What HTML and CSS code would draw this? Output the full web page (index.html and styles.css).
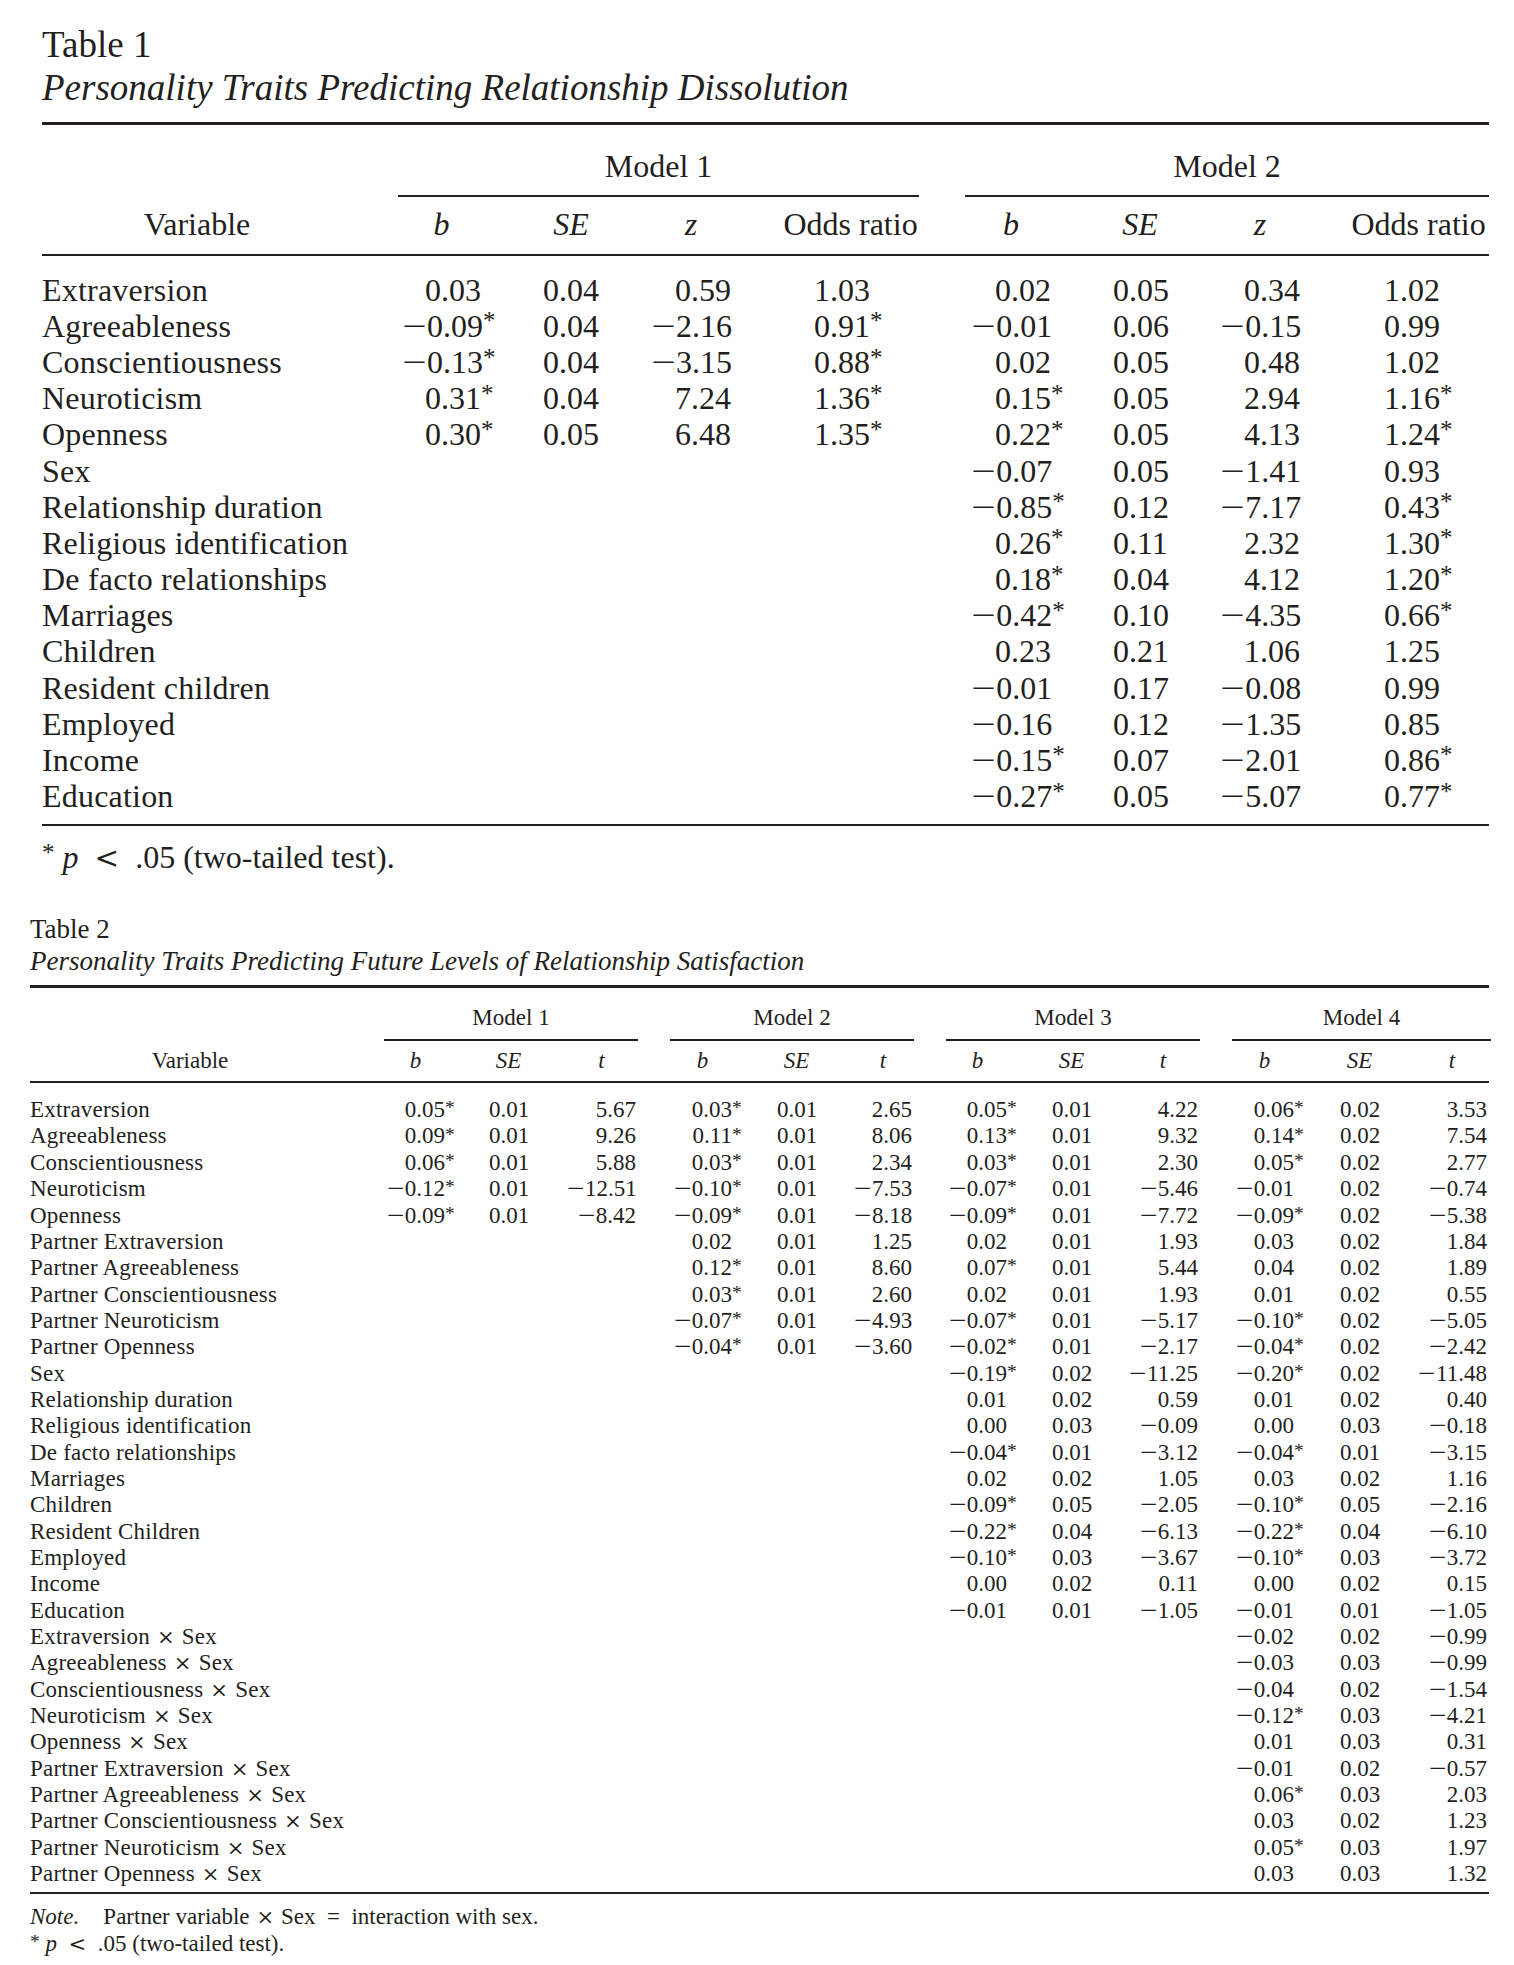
FILE: index.html
```html
<!DOCTYPE html>
<html lang="en">
<head>
<meta charset="utf-8">
<title>Personality Traits Tables</title>
<link rel="stylesheet" href="styles.css">
</head>
<body>
<main class="page">

<section class="tbl tbl-1">
  <div class="cap">
    <div class="cap-label">Table 1</div>
    <div class="cap-title">Personality Traits Predicting Relationship Dissolution</div>
  </div>
  <div class="frame">
    <table class="data">
      <colgroup>
        <col class="w1"><col class="w2"><col class="w3"><col class="w4"><col class="w5"><col class="w6"><col class="w7"><col class="w8"><col class="w9">
      </colgroup>
      <thead>
        <tr class="grp-row">
          <th rowspan="2" class="var-h">Variable</th>
          <th colspan="4" class="grp"><div class="grp-lab">Model 1</div></th>
          <th colspan="4" class="grp"><div class="grp-lab">Model 2</div></th>
        </tr>
        <tr class="col-row">
          <th><i>b</i></th><th><i>SE</i></th><th><i>z</i></th><th>Odds ratio</th>
          <th><i>b</i></th><th><i>SE</i></th><th><i>z</i></th><th>Odds ratio</th>
        </tr>
      </thead>
      <tbody>
        <tr><td>Extraversion</td><td>0.03</td><td>0.04</td><td>0.59</td><td>1.03</td><td>0.02</td><td>0.05</td><td>0.34</td><td>1.02</td></tr>
        <tr><td>Agreeableness</td><td><span class="m">&minus;</span>0.09<sup>*</sup></td><td>0.04</td><td><span class="m">&minus;</span>2.16</td><td>0.91<sup>*</sup></td><td><span class="m">&minus;</span>0.01</td><td>0.06</td><td><span class="m">&minus;</span>0.15</td><td>0.99</td></tr>
        <tr><td>Conscientiousness</td><td><span class="m">&minus;</span>0.13<sup>*</sup></td><td>0.04</td><td><span class="m">&minus;</span>3.15</td><td>0.88<sup>*</sup></td><td>0.02</td><td>0.05</td><td>0.48</td><td>1.02</td></tr>
        <tr><td>Neuroticism</td><td>0.31<sup>*</sup></td><td>0.04</td><td>7.24</td><td>1.36<sup>*</sup></td><td>0.15<sup>*</sup></td><td>0.05</td><td>2.94</td><td>1.16<sup>*</sup></td></tr>
        <tr><td>Openness</td><td>0.30<sup>*</sup></td><td>0.05</td><td>6.48</td><td>1.35<sup>*</sup></td><td>0.22<sup>*</sup></td><td>0.05</td><td>4.13</td><td>1.24<sup>*</sup></td></tr>
        <tr><td>Sex</td><td></td><td></td><td></td><td></td><td><span class="m">&minus;</span>0.07</td><td>0.05</td><td><span class="m">&minus;</span>1.41</td><td>0.93</td></tr>
        <tr><td>Relationship duration</td><td></td><td></td><td></td><td></td><td><span class="m">&minus;</span>0.85<sup>*</sup></td><td>0.12</td><td><span class="m">&minus;</span>7.17</td><td>0.43<sup>*</sup></td></tr>
        <tr><td>Religious identification</td><td></td><td></td><td></td><td></td><td>0.26<sup>*</sup></td><td>0.11</td><td>2.32</td><td>1.30<sup>*</sup></td></tr>
        <tr><td>De facto relationships</td><td></td><td></td><td></td><td></td><td>0.18<sup>*</sup></td><td>0.04</td><td>4.12</td><td>1.20<sup>*</sup></td></tr>
        <tr><td>Marriages</td><td></td><td></td><td></td><td></td><td><span class="m">&minus;</span>0.42<sup>*</sup></td><td>0.10</td><td><span class="m">&minus;</span>4.35</td><td>0.66<sup>*</sup></td></tr>
        <tr><td>Children</td><td></td><td></td><td></td><td></td><td>0.23</td><td>0.21</td><td>1.06</td><td>1.25</td></tr>
        <tr><td>Resident children</td><td></td><td></td><td></td><td></td><td><span class="m">&minus;</span>0.01</td><td>0.17</td><td><span class="m">&minus;</span>0.08</td><td>0.99</td></tr>
        <tr><td>Employed</td><td></td><td></td><td></td><td></td><td><span class="m">&minus;</span>0.16</td><td>0.12</td><td><span class="m">&minus;</span>1.35</td><td>0.85</td></tr>
        <tr><td>Income</td><td></td><td></td><td></td><td></td><td><span class="m">&minus;</span>0.15<sup>*</sup></td><td>0.07</td><td><span class="m">&minus;</span>2.01</td><td>0.86<sup>*</sup></td></tr>
        <tr><td>Education</td><td></td><td></td><td></td><td></td><td><span class="m">&minus;</span>0.27<sup>*</sup></td><td>0.05</td><td><span class="m">&minus;</span>5.07</td><td>0.77<sup>*</sup></td></tr>
      </tbody>
    </table>
  </div>
  <p class="foot"><sup class="fs">*</sup> <i>p</i>&ensp;<span class="lt">&lt;</span>&ensp;.05 (two-tailed test).</p>
</section>

<section class="tbl tbl-2">
  <div class="cap">
    <div class="cap-label">Table 2</div>
    <div class="cap-title">Personality Traits Predicting Future Levels of Relationship Satisfaction</div>
  </div>
  <div class="frame">
    <table class="data">
      <colgroup>
        <col class="w1"><col class="w2"><col class="w3"><col class="w4"><col class="w5"><col class="w6"><col class="w7"><col class="w8"><col class="w9"><col class="w10"><col class="w11"><col class="w12"><col class="w13">
      </colgroup>
      <thead>
        <tr class="grp-row">
          <th rowspan="2" class="var-h">Variable</th>
          <th colspan="3" class="grp"><div class="grp-lab">Model 1</div></th>
          <th colspan="3" class="grp"><div class="grp-lab">Model 2</div></th>
          <th colspan="3" class="grp"><div class="grp-lab">Model 3</div></th>
          <th colspan="3" class="grp"><div class="grp-lab">Model 4</div></th>
        </tr>
        <tr class="col-row">
          <th><i>b</i></th><th><i>SE</i></th><th><i>t</i></th>
          <th><i>b</i></th><th><i>SE</i></th><th><i>t</i></th>
          <th><i>b</i></th><th><i>SE</i></th><th><i>t</i></th>
          <th><i>b</i></th><th><i>SE</i></th><th><i>t</i></th>
        </tr>
      </thead>
      <tbody>
        <tr><td>Extraversion</td><td>0.05<sup>*</sup></td><td>0.01</td><td>5.67</td><td>0.03<sup>*</sup></td><td>0.01</td><td>2.65</td><td>0.05<sup>*</sup></td><td>0.01</td><td>4.22</td><td>0.06<sup>*</sup></td><td>0.02</td><td>3.53</td></tr>
        <tr><td>Agreeableness</td><td>0.09<sup>*</sup></td><td>0.01</td><td>9.26</td><td>0.11<sup>*</sup></td><td>0.01</td><td>8.06</td><td>0.13<sup>*</sup></td><td>0.01</td><td>9.32</td><td>0.14<sup>*</sup></td><td>0.02</td><td>7.54</td></tr>
        <tr><td>Conscientiousness</td><td>0.06<sup>*</sup></td><td>0.01</td><td>5.88</td><td>0.03<sup>*</sup></td><td>0.01</td><td>2.34</td><td>0.03<sup>*</sup></td><td>0.01</td><td>2.30</td><td>0.05<sup>*</sup></td><td>0.02</td><td>2.77</td></tr>
        <tr><td>Neuroticism</td><td><span class="m">&minus;</span>0.12<sup>*</sup></td><td>0.01</td><td><span class="m">&minus;</span>12.51</td><td><span class="m">&minus;</span>0.10<sup>*</sup></td><td>0.01</td><td><span class="m">&minus;</span>7.53</td><td><span class="m">&minus;</span>0.07<sup>*</sup></td><td>0.01</td><td><span class="m">&minus;</span>5.46</td><td><span class="m">&minus;</span>0.01</td><td>0.02</td><td><span class="m">&minus;</span>0.74</td></tr>
        <tr><td>Openness</td><td><span class="m">&minus;</span>0.09<sup>*</sup></td><td>0.01</td><td><span class="m">&minus;</span>8.42</td><td><span class="m">&minus;</span>0.09<sup>*</sup></td><td>0.01</td><td><span class="m">&minus;</span>8.18</td><td><span class="m">&minus;</span>0.09<sup>*</sup></td><td>0.01</td><td><span class="m">&minus;</span>7.72</td><td><span class="m">&minus;</span>0.09<sup>*</sup></td><td>0.02</td><td><span class="m">&minus;</span>5.38</td></tr>
        <tr><td>Partner Extraversion</td><td></td><td></td><td></td><td>0.02</td><td>0.01</td><td>1.25</td><td>0.02</td><td>0.01</td><td>1.93</td><td>0.03</td><td>0.02</td><td>1.84</td></tr>
        <tr><td>Partner Agreeableness</td><td></td><td></td><td></td><td>0.12<sup>*</sup></td><td>0.01</td><td>8.60</td><td>0.07<sup>*</sup></td><td>0.01</td><td>5.44</td><td>0.04</td><td>0.02</td><td>1.89</td></tr>
        <tr><td>Partner Conscientiousness</td><td></td><td></td><td></td><td>0.03<sup>*</sup></td><td>0.01</td><td>2.60</td><td>0.02</td><td>0.01</td><td>1.93</td><td>0.01</td><td>0.02</td><td>0.55</td></tr>
        <tr><td>Partner Neuroticism</td><td></td><td></td><td></td><td><span class="m">&minus;</span>0.07<sup>*</sup></td><td>0.01</td><td><span class="m">&minus;</span>4.93</td><td><span class="m">&minus;</span>0.07<sup>*</sup></td><td>0.01</td><td><span class="m">&minus;</span>5.17</td><td><span class="m">&minus;</span>0.10<sup>*</sup></td><td>0.02</td><td><span class="m">&minus;</span>5.05</td></tr>
        <tr><td>Partner Openness</td><td></td><td></td><td></td><td><span class="m">&minus;</span>0.04<sup>*</sup></td><td>0.01</td><td><span class="m">&minus;</span>3.60</td><td><span class="m">&minus;</span>0.02<sup>*</sup></td><td>0.01</td><td><span class="m">&minus;</span>2.17</td><td><span class="m">&minus;</span>0.04<sup>*</sup></td><td>0.02</td><td><span class="m">&minus;</span>2.42</td></tr>
        <tr><td>Sex</td><td></td><td></td><td></td><td></td><td></td><td></td><td><span class="m">&minus;</span>0.19<sup>*</sup></td><td>0.02</td><td><span class="m">&minus;</span>11.25</td><td><span class="m">&minus;</span>0.20<sup>*</sup></td><td>0.02</td><td><span class="m">&minus;</span>11.48</td></tr>
        <tr><td>Relationship duration</td><td></td><td></td><td></td><td></td><td></td><td></td><td>0.01</td><td>0.02</td><td>0.59</td><td>0.01</td><td>0.02</td><td>0.40</td></tr>
        <tr><td>Religious identification</td><td></td><td></td><td></td><td></td><td></td><td></td><td>0.00</td><td>0.03</td><td><span class="m">&minus;</span>0.09</td><td>0.00</td><td>0.03</td><td><span class="m">&minus;</span>0.18</td></tr>
        <tr><td>De facto relationships</td><td></td><td></td><td></td><td></td><td></td><td></td><td><span class="m">&minus;</span>0.04<sup>*</sup></td><td>0.01</td><td><span class="m">&minus;</span>3.12</td><td><span class="m">&minus;</span>0.04<sup>*</sup></td><td>0.01</td><td><span class="m">&minus;</span>3.15</td></tr>
        <tr><td>Marriages</td><td></td><td></td><td></td><td></td><td></td><td></td><td>0.02</td><td>0.02</td><td>1.05</td><td>0.03</td><td>0.02</td><td>1.16</td></tr>
        <tr><td>Children</td><td></td><td></td><td></td><td></td><td></td><td></td><td><span class="m">&minus;</span>0.09<sup>*</sup></td><td>0.05</td><td><span class="m">&minus;</span>2.05</td><td><span class="m">&minus;</span>0.10<sup>*</sup></td><td>0.05</td><td><span class="m">&minus;</span>2.16</td></tr>
        <tr><td>Resident Children</td><td></td><td></td><td></td><td></td><td></td><td></td><td><span class="m">&minus;</span>0.22<sup>*</sup></td><td>0.04</td><td><span class="m">&minus;</span>6.13</td><td><span class="m">&minus;</span>0.22<sup>*</sup></td><td>0.04</td><td><span class="m">&minus;</span>6.10</td></tr>
        <tr><td>Employed</td><td></td><td></td><td></td><td></td><td></td><td></td><td><span class="m">&minus;</span>0.10<sup>*</sup></td><td>0.03</td><td><span class="m">&minus;</span>3.67</td><td><span class="m">&minus;</span>0.10<sup>*</sup></td><td>0.03</td><td><span class="m">&minus;</span>3.72</td></tr>
        <tr><td>Income</td><td></td><td></td><td></td><td></td><td></td><td></td><td>0.00</td><td>0.02</td><td>0.11</td><td>0.00</td><td>0.02</td><td>0.15</td></tr>
        <tr><td>Education</td><td></td><td></td><td></td><td></td><td></td><td></td><td><span class="m">&minus;</span>0.01</td><td>0.01</td><td><span class="m">&minus;</span>1.05</td><td><span class="m">&minus;</span>0.01</td><td>0.01</td><td><span class="m">&minus;</span>1.05</td></tr>
        <tr><td>Extraversion <span class="x">&times;</span> Sex</td><td></td><td></td><td></td><td></td><td></td><td></td><td></td><td></td><td></td><td><span class="m">&minus;</span>0.02</td><td>0.02</td><td><span class="m">&minus;</span>0.99</td></tr>
        <tr><td>Agreeableness <span class="x">&times;</span> Sex</td><td></td><td></td><td></td><td></td><td></td><td></td><td></td><td></td><td></td><td><span class="m">&minus;</span>0.03</td><td>0.03</td><td><span class="m">&minus;</span>0.99</td></tr>
        <tr><td>Conscientiousness <span class="x">&times;</span> Sex</td><td></td><td></td><td></td><td></td><td></td><td></td><td></td><td></td><td></td><td><span class="m">&minus;</span>0.04</td><td>0.02</td><td><span class="m">&minus;</span>1.54</td></tr>
        <tr><td>Neuroticism <span class="x">&times;</span> Sex</td><td></td><td></td><td></td><td></td><td></td><td></td><td></td><td></td><td></td><td><span class="m">&minus;</span>0.12<sup>*</sup></td><td>0.03</td><td><span class="m">&minus;</span>4.21</td></tr>
        <tr><td>Openness <span class="x">&times;</span> Sex</td><td></td><td></td><td></td><td></td><td></td><td></td><td></td><td></td><td></td><td>0.01</td><td>0.03</td><td>0.31</td></tr>
        <tr><td>Partner Extraversion <span class="x">&times;</span> Sex</td><td></td><td></td><td></td><td></td><td></td><td></td><td></td><td></td><td></td><td><span class="m">&minus;</span>0.01</td><td>0.02</td><td><span class="m">&minus;</span>0.57</td></tr>
        <tr><td>Partner Agreeableness <span class="x">&times;</span> Sex</td><td></td><td></td><td></td><td></td><td></td><td></td><td></td><td></td><td></td><td>0.06<sup>*</sup></td><td>0.03</td><td>2.03</td></tr>
        <tr><td>Partner Conscientiousness <span class="x">&times;</span> Sex</td><td></td><td></td><td></td><td></td><td></td><td></td><td></td><td></td><td></td><td>0.03</td><td>0.02</td><td>1.23</td></tr>
        <tr><td>Partner Neuroticism <span class="x">&times;</span> Sex</td><td></td><td></td><td></td><td></td><td></td><td></td><td></td><td></td><td></td><td>0.05<sup>*</sup></td><td>0.03</td><td>1.97</td></tr>
        <tr><td>Partner Openness <span class="x">&times;</span> Sex</td><td></td><td></td><td></td><td></td><td></td><td></td><td></td><td></td><td></td><td>0.03</td><td>0.03</td><td>1.32</td></tr>
      </tbody>
    </table>
  </div>
  <p class="note"><i class="note-lbl">Note.</i> Partner variable <span class="x">&times;</span> Sex&ensp;=&ensp;interaction with sex.</p>
  <p class="note"><sup class="fs">*</sup> <i>p</i>&ensp;<span class="lt">&lt;</span>&ensp;.05 (two-tailed test).</p>
</section>

</main>
</body>
</html>
```

FILE: styles.css
```css
* { box-sizing: border-box; }

html, body {
  margin: 0;
  padding: 0;
  background: #ffffff;
}

body {
  font-family: "Liberation Serif", "Times New Roman", serif;
  color: #231f20;
}

.page {
  padding-top: 23px;
}

/* ---------- shared table pieces ---------- */
.cap-title { font-style: italic; }

.frame {
  border-top: 3px solid #231f20;
  border-bottom: 2px solid #231f20;
}

.data {
  width: 100%;
  table-layout: fixed;
  border-collapse: separate;
  border-spacing: 0;
}

.data th {
  font-weight: normal;
  padding: 0;
  text-align: center;
  white-space: nowrap;
}

.data td {
  padding: 0;
  text-align: right;
  white-space: nowrap;
}

.data td:first-child { text-align: left; }

.data .var-h { vertical-align: bottom; }

.data .grp { vertical-align: top; }

.data .grp-lab {
  border-bottom: 2px solid #231f20;
  white-space: nowrap;
}

.data sup {
  display: inline-block;
  width: 0;
  line-height: 0;
  text-align: left;
}

/* minus sign: a longer bar, as in the typeset original */
.m {
  display: inline-block;
  margin-right: 0.22em;
  transform: scaleX(1.35);
  transform-origin: 0 50%;
}

/* multiplication sign and less-than: the larger math glyphs of the original */
.x {
  font-family: "DejaVu Serif", "Liberation Serif", serif;
  font-size: 0.92em;
  line-height: 0;
  margin: 0 0.05em;
}

.lt {
  font-family: "DejaVu Serif", "Liberation Serif", serif;
  font-size: 0.92em;
  line-height: 0;
}

.fs { line-height: 0; }

.foot, .note { margin: 0; white-space: nowrap; }

/* ---------- Table 1 ---------- */
.tbl-1 {
  margin-left: 42px;
  width: 1447px;
}

.tbl-1 .cap {
  font-size: 37px;
  line-height: 43px;
}

.tbl-1 .frame { margin-top: 13px; }

.tbl-1 .data {
  font-size: 32px;
  line-height: 36.17px;
}

.tbl-1 tbody td:first-child { letter-spacing: 0.2px; }

.tbl-1 .w1 { width: 310px; }
.tbl-1 .w2 { width: 141px; }
.tbl-1 .w3 { width: 106px; }
.tbl-1 .w4 { width: 132px; }
.tbl-1 .w5 { width: 188px; }
.tbl-1 .w6 { width: 144px; }
.tbl-1 .w7 { width: 104px; }
.tbl-1 .w8 { width: 133px; }
.tbl-1 .w9 { width: 189px; }

.tbl-1 .grp { padding-top: 23px; }
.tbl-1 .grp-lab {
  margin-left: 46px;
  padding-bottom: 10.7px;
}

.tbl-1 .col-row th,
.tbl-1 .var-h {
  padding-top: 9px;
  padding-bottom: 11.7px;
  border-bottom: 2px solid #231f20;
}

.tbl-1 .col-row th:nth-child(1) { padding-left: 50px; padding-right: 12px; }
.tbl-1 .col-row th:nth-child(2) { padding-left: 50px; }
.tbl-1 .col-row th:nth-child(3) { padding-left: 52px; }
.tbl-1 .col-row th:nth-child(4) { padding-left: 51px; }
.tbl-1 .col-row th:nth-child(5) { padding-left: 52px; padding-right: 12px; }
.tbl-1 .col-row th:nth-child(6) { padding-left: 50px; }
.tbl-1 .col-row th:nth-child(7) { padding-left: 53px; }
.tbl-1 .col-row th:nth-child(8) { padding-left: 50px; padding-right: 2px; }

.tbl-1 tbody td:nth-child(2) { padding-left: 50px; padding-right: 12px; }
.tbl-1 tbody td:nth-child(3) { padding-left: 50px; }
.tbl-1 tbody td:nth-child(4) { padding-left: 52px; }
.tbl-1 tbody td:nth-child(5) { padding-left: 51px; padding-right: 49px; }
.tbl-1 tbody td:nth-child(6) { padding-left: 52px; padding-right: 12px; }
.tbl-1 tbody td:nth-child(7) { padding-left: 50px; }
.tbl-1 tbody td:nth-child(8) { padding-left: 53px; }
.tbl-1 tbody td:nth-child(9) { padding-left: 50px; padding-right: 49px; }

.tbl-1 tbody tr:first-child td { padding-top: 16px; }
.tbl-1 tbody tr:last-child td { padding-bottom: 10px; }

.tbl-1 .data sup {
  font-size: 0.78em;
  vertical-align: 0.3em;
}

.tbl-1 .foot {
  margin-top: 13px;
  font-size: 32px;
  line-height: 36.17px;
}

.tbl-1 .fs {
  font-size: 0.78em;
  vertical-align: 0.3em;
}

/* ---------- Table 2 ---------- */
.tbl-2 {
  margin-left: 30px;
  margin-top: 37.3px;
  width: 1459px;
}

.tbl-2 .cap {
  font-size: 27px;
  line-height: 32px;
}

.tbl-2 .frame { margin-top: 8px; }

.tbl-2 .data {
  font-size: 23px;
  line-height: 26.35px;
}

.tbl-2 tbody td:first-child { letter-spacing: 0.2px; }

.tbl-2 .w1 { width: 320px; }
.tbl-2 .w2 { width: 106px; }
.tbl-2 .w3 { width: 72px; }
.tbl-2 .w4 { width: 108px; }
.tbl-2 .w5 { width: 107px; }
.tbl-2 .w6 { width: 73px; }
.tbl-2 .w7 { width: 96px; }
.tbl-2 .w8 { width: 106px; }
.tbl-2 .w9 { width: 73px; }
.tbl-2 .w10 { width: 107px; }
.tbl-2 .w11 { width: 107px; }
.tbl-2 .w12 { width: 74px; }
.tbl-2 .w13 { width: 110px; }

.tbl-2 .grp { padding-top: 17px; }
.tbl-2 .grp-lab {
  margin-left: 34px;
  margin-right: -2px;
  padding-bottom: 7.6px;
}

.tbl-2 .col-row th,
.tbl-2 .var-h {
  padding-top: 7px;
  padding-bottom: 6.7px;
  border-bottom: 2px solid #231f20;
}

.tbl-2 .col-row th:nth-child(1)  { padding-left: 36px; padding-right: 11px; }
.tbl-2 .col-row th:nth-child(2)  { padding-left: 33px; }
.tbl-2 .col-row th:nth-child(3)  { padding-left: 39px; }
.tbl-2 .col-row th:nth-child(4)  { padding-left: 37px; padding-right: 11px; }
.tbl-2 .col-row th:nth-child(5)  { padding-left: 34px; }
.tbl-2 .col-row th:nth-child(6)  { padding-left: 38px; }
.tbl-2 .col-row th:nth-child(7)  { padding-left: 36px; padding-right: 11px; }
.tbl-2 .col-row th:nth-child(8)  { padding-left: 34px; }
.tbl-2 .col-row th:nth-child(9)  { padding-left: 37px; }
.tbl-2 .col-row th:nth-child(10) { padding-left: 37px; padding-right: 11px; }
.tbl-2 .col-row th:nth-child(11) { padding-left: 35px; }
.tbl-2 .col-row th:nth-child(12) { padding-left: 38px; padding-right: 2px; }

.tbl-2 tbody td:nth-child(2)  { padding-left: 36px; padding-right: 11px; }
.tbl-2 tbody td:nth-child(3)  { padding-left: 33px; }
.tbl-2 tbody td:nth-child(4)  { padding-left: 39px; }
.tbl-2 tbody td:nth-child(5)  { padding-left: 37px; padding-right: 11px; }
.tbl-2 tbody td:nth-child(6)  { padding-left: 34px; }
.tbl-2 tbody td:nth-child(7)  { padding-left: 38px; }
.tbl-2 tbody td:nth-child(8)  { padding-left: 36px; padding-right: 11px; }
.tbl-2 tbody td:nth-child(9)  { padding-left: 34px; }
.tbl-2 tbody td:nth-child(10) { padding-left: 37px; }
.tbl-2 tbody td:nth-child(11) { padding-left: 37px; padding-right: 11px; }
.tbl-2 tbody td:nth-child(12) { padding-left: 35px; }
.tbl-2 tbody td:nth-child(13) { padding-left: 38px; padding-right: 2px; }

.tbl-2 tbody tr:first-child td { padding-top: 14.4px; }
.tbl-2 tbody tr:last-child td { padding-bottom: 5px; }

.tbl-2 .data sup {
  font-size: 0.85em;
  vertical-align: 0.15em;
}

.tbl-2 .note {
  font-size: 23px;
  line-height: 27px;
}

.tbl-2 .note:first-of-type { margin-top: 8.8px; }

.tbl-2 .note-lbl { margin-right: 0.8em; }

.tbl-2 .fs {
  font-size: 0.85em;
  vertical-align: 0.15em;
}
```
